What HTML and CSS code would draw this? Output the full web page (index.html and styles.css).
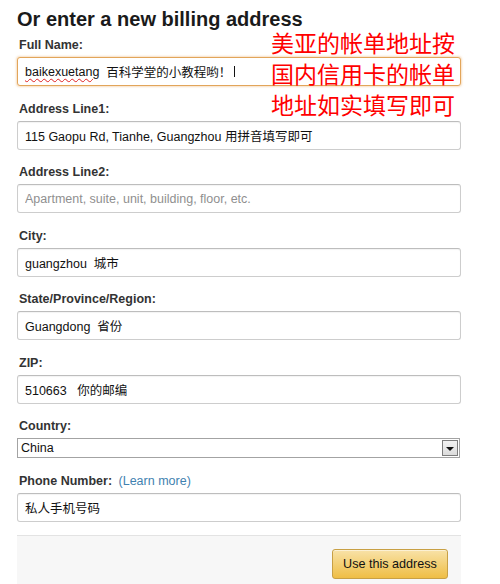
FILE: index.html
```html
<!DOCTYPE html>
<html lang="zh-CN">
<head>
<meta charset="utf-8">
<title>Billing address</title>
<link rel="stylesheet" href="styles.css">
</head>
<body>
<div class="page">
  <h1 class="title">Or enter a new billing address</h1>
  <form class="form">
    <div class="field">
      <label class="label">Full Name:</label>
      <div class="textbox focused"><span class="spell">baikexuetang</span>&nbsp; 百科学堂的小教程哟！<span class="caret"></span></div>
    </div>
    <div class="field">
      <label class="label">Address Line1:</label>
      <input class="textbox" type="text" value="115 Gaopu Rd, Tianhe, Guangzhou 用拼音填写即可">
    </div>
    <div class="field">
      <label class="label">Address Line2:</label>
      <input class="textbox" type="text" placeholder="Apartment, suite, unit, building, floor, etc.">
    </div>
    <div class="field">
      <label class="label">City:</label>
      <input class="textbox" type="text" value="guangzhou  城市">
    </div>
    <div class="field">
      <label class="label">State/Province/Region:</label>
      <input class="textbox" type="text" value="Guangdong  省份">
    </div>
    <div class="field">
      <label class="label">ZIP:</label>
      <input class="textbox" type="text" value="510663   你的邮编">
    </div>
    <div class="field">
      <label class="label">Country:</label>
      <div class="select"><span class="select-value">China</span><span class="select-arrow"><span class="tri"></span></span></div>
    </div>
    <div class="field">
      <label class="label">Phone Number: <span class="learn">(Learn more)</span></label>
      <input class="textbox" type="text" value="私人手机号码">
    </div>
    <div class="footer">
      <button class="btn" type="button">Use this address</button>
    </div>
  </form>
  <div class="note">美亚的帐单地址按<br>国内信用卡的帐单<br>地址如实填写即可</div>
</div>
</body>
</html>
```
FILE: styles.css
```css
html, body {
  margin: 0;
  padding: 0;
  background: #fff;
}
.page {
  position: relative;
  width: 444px;
  height: 577px;
  padding: 7px 39px 0 17px;
  font-family: "Liberation Sans", Arial, "Noto Sans CJK SC", sans-serif;
  color: #111;
  overflow: hidden;
}
.title {
  margin: 0;
  font-size: 20px;
  line-height: 24px;
  font-weight: bold;
  color: #1a1a1a;
}
.form {
  margin: 5px 0 0;
  display: flex;
  flex-direction: column;
  gap: 13.5px;
}
.field {
  display: flex;
  flex-direction: column;
  gap: 2px;
}
.label {
  font-size: 12.5px;
  line-height: 19px;
  font-weight: bold;
  color: #333;
  padding-left: 2px;
}
.learn {
  font-weight: normal;
  color: #3f82b0;
  margin-left: 3px;
}
.textbox {
  box-sizing: border-box;
  width: 444px;
  height: 29px;
  margin: 0;
  padding: 0 7px;
  border: 1px solid #cdcdcd;
  border-top-color: #bdbdbd;
  border-radius: 3px;
  box-shadow: inset 0 1px 1px rgba(0,0,0,0.05);
  font-family: "Liberation Sans", Arial, "Noto Sans CJK SC", sans-serif;
  font-size: 12.5px;
  color: #111;
  background: #fff;
  outline: none;
  display: flex;
  align-items: center;
  white-space: pre;
}
.textbox::placeholder {
  color: #8f8f8f;
}
.focused {
  border-color: #e2a55a;
  box-shadow: 0 0 2px 1px rgba(230, 160, 80, 0.35);
}
.spell {
  text-decoration: underline wavy #e02020;
  text-decoration-thickness: 1px;
  text-underline-offset: 2px;
}
.caret {
  display: inline-block;
  width: 0;
  height: 11px;
  border-left: 1px solid #111;
  margin-left: 3px;
}
.select {
  box-sizing: border-box;
  width: 443px;
  height: 20px;
  border: 1px solid #a3a3a3;
  display: flex;
  align-items: center;
  justify-content: space-between;
  padding: 0 1px 0 3px;
  font-size: 12.5px;
  color: #111;
  background: #fff;
}
.select-arrow {
  box-sizing: border-box;
  width: 16px;
  height: 16px;
  border: 1px solid #7d7d7d;
  background: linear-gradient(#f2f2f2, #dcdcdc);
  display: flex;
  align-items: center;
  justify-content: center;
}
.tri {
  width: 0;
  height: 0;
  border-left: 4px solid transparent;
  border-right: 4px solid transparent;
  border-top: 4px solid #111;
  margin-top: 1px;
}
.footer {
  box-sizing: border-box;
  width: 444px;
  height: 60px;
  border-top: 1px solid #e3e3e3;
  background: #f7f7f7;
  display: flex;
  justify-content: flex-end;
  align-items: flex-start;
  padding: 13px 13px 0 0;
}
.btn {
  box-sizing: border-box;
  width: 116px;
  height: 30px;
  border: 1px solid #c8a045;
  border-radius: 3px;
  background: linear-gradient(#f8e2a8, #efbe45);
  font-family: "Liberation Sans", Arial, sans-serif;
  font-size: 12.6px;
  color: #111;
  padding: 0;
  box-shadow: inset 0 1px 0 rgba(255,255,255,0.5);
}
.note {
  position: absolute;
  left: 271px;
  top: 27px;
  font-family: "Noto Sans CJK SC", sans-serif;
  font-size: 23px;
  line-height: 31px;
  color: #f00;
  white-space: nowrap;
}
```
